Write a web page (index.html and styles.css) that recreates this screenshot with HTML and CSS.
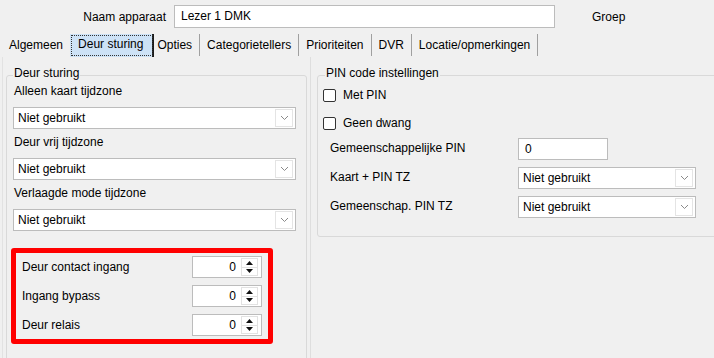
FILE: index.html
```html
<!DOCTYPE html>
<html lang="nl">
<head>
    <meta charset="UTF-8">
    <meta name="viewport" content="width=device-width, initial-scale=1.0">
    <title>Lezer instellingen - Deur sturing</title>
    <link rel="stylesheet" href="styles.css">
</head>
<body>
    <div class="window">
        <!-- Naam + groep -->
        <div class="header">
            <span class="name-label">Naam apparaat</span>
            <div class="textbox name-box">Lezer 1 DMK</div>
            <span class="group-label">Groep</span>
        </div>

        <!-- Tabbladen -->
        <div class="tabs">
            <span class="tab first">Algemeen</span>
            <span class="tab active">Deur sturing</span>
            <span class="tab after-active">Opties</span>
            <span class="tab">Categorietellers</span>
            <span class="tab">Prioriteiten</span>
            <span class="tab">DVR</span>
            <span class="tab">Locatie/opmerkingen</span>
        </div>

        <div class="tab-page">
            <!-- Linker kolom: deur sturing -->
            <div class="col-left">
                <div class="group group-door">
                    <div class="group-title">Deur sturing</div>

                    <div class="field-label">Alleen kaart tijdzone</div>
                    <div class="combo">
                        <span class="combo-text">Niet gebruikt</span>
                        <span class="drop"><svg width="9" height="6" viewBox="0 0 9 6"><path d="M1 1 L4.5 4.5 L8 1" fill="none" stroke="#8a8a8a" stroke-width="1"/></svg></span>
                    </div>

                    <div class="field-label">Deur vrij tijdzone</div>
                    <div class="combo">
                        <span class="combo-text">Niet gebruikt</span>
                        <span class="drop"><svg width="9" height="6" viewBox="0 0 9 6"><path d="M1 1 L4.5 4.5 L8 1" fill="none" stroke="#8a8a8a" stroke-width="1"/></svg></span>
                    </div>

                    <div class="field-label">Verlaagde mode tijdzone</div>
                    <div class="combo">
                        <span class="combo-text">Niet gebruikt</span>
                        <span class="drop"><svg width="9" height="6" viewBox="0 0 9 6"><path d="M1 1 L4.5 4.5 L8 1" fill="none" stroke="#8a8a8a" stroke-width="1"/></svg></span>
                    </div>

                    <div class="highlight">
                        <div class="spin-row">
                            <span class="spin-label">Deur contact ingang</span>
                            <div class="spinner">
                                <span class="spin-value">0</span>
                                <span class="spin-btns">
                                    <span class="spin-up"><svg width="7" height="4" viewBox="0 0 7 4"><path d="M0 4 L3.5 0 L7 4 Z" fill="#111"/></svg></span>
                                    <span class="spin-down"><svg width="7" height="4" viewBox="0 0 7 4"><path d="M0 0 L3.5 4 L7 0 Z" fill="#111"/></svg></span>
                                </span>
                            </div>
                        </div>
                        <div class="spin-row">
                            <span class="spin-label">Ingang bypass</span>
                            <div class="spinner">
                                <span class="spin-value">0</span>
                                <span class="spin-btns">
                                    <span class="spin-up"><svg width="7" height="4" viewBox="0 0 7 4"><path d="M0 4 L3.5 0 L7 4 Z" fill="#111"/></svg></span>
                                    <span class="spin-down"><svg width="7" height="4" viewBox="0 0 7 4"><path d="M0 0 L3.5 4 L7 0 Z" fill="#111"/></svg></span>
                                </span>
                            </div>
                        </div>
                        <div class="spin-row">
                            <span class="spin-label">Deur relais</span>
                            <div class="spinner">
                                <span class="spin-value">0</span>
                                <span class="spin-btns">
                                    <span class="spin-up"><svg width="7" height="4" viewBox="0 0 7 4"><path d="M0 4 L3.5 0 L7 4 Z" fill="#111"/></svg></span>
                                    <span class="spin-down"><svg width="7" height="4" viewBox="0 0 7 4"><path d="M0 0 L3.5 4 L7 0 Z" fill="#111"/></svg></span>
                                </span>
                            </div>
                        </div>
                    </div>
                </div>
            </div>

            <!-- Rechter kolom: PIN code -->
            <div class="col-right">
                <div class="group group-pin">
                    <div class="group-title">PIN code instellingen</div>

                    <div class="check-row">
                        <span class="checkbox"></span>
                        <span>Met PIN</span>
                    </div>
                    <div class="check-row">
                        <span class="checkbox"></span>
                        <span>Geen dwang</span>
                    </div>

                    <div class="pin-grid">
                        <span class="pin-label">Gemeenschappelijke PIN</span>
                        <div class="textbox pin-box">0</div>

                        <span class="pin-label">Kaart + PIN TZ</span>
                        <div class="combo combo-small">
                            <span class="combo-text">Niet gebruikt</span>
                            <span class="drop"><svg width="9" height="6" viewBox="0 0 9 6"><path d="M1 1 L4.5 4.5 L8 1" fill="none" stroke="#8a8a8a" stroke-width="1"/></svg></span>
                        </div>

                        <span class="pin-label">Gemeenschap. PIN TZ</span>
                        <div class="combo combo-small">
                            <span class="combo-text">Niet gebruikt</span>
                            <span class="drop"><svg width="9" height="6" viewBox="0 0 9 6"><path d="M1 1 L4.5 4.5 L8 1" fill="none" stroke="#8a8a8a" stroke-width="1"/></svg></span>
                        </div>
                    </div>
                </div>
            </div>
        </div>
    </div>
</body>
</html>
```

FILE: styles.css
```css
html, body {
    margin: 0;
    padding: 0;
    overflow: hidden;
}

body {
    background: #f0f0f0;
    font-family: "Liberation Sans", Arial, sans-serif;
    font-size: 12px;
    color: #000;
    width: 714px;
    height: 358px;
}

.window {
    width: 714px;
    height: 358px;
    overflow: hidden;
}

/* header */
.header {
    display: flex;
    align-items: center;
    padding-top: 5px;
    height: 23px;
    padding-bottom: 5px;
}

.name-label {
    width: 166px;
    text-align: right;
    margin-right: 8px;
}

.textbox {
    box-sizing: border-box;
    background: #fff;
    border: 1px solid #bcbcbc;
    height: 23px;
    line-height: 21px;
    padding-left: 6px;
}

.name-box {
    width: 381px;
}

.group-label {
    margin-left: 37px;
}

/* tabs */
.tabs {
    display: flex;
    align-items: stretch;
    height: 24px;
    padding-left: 4px;
}

.tab {
    display: flex;
    align-items: center;
    padding: 0 7px;
    border-right: 1px solid #a0a0a0;
    margin: 1px 0;
}

.tab.first {
    border-right: none;
    padding: 0 7px 0 5px;
}

.tab.active {
    background: #cde2f6;
    outline: 1px dotted #333;
    outline-offset: -2px;
    border-right: 2px solid #1c1c1c;
    padding: 0 9px 4px 8px;
    margin: 1px 0 0;
}

.tab.after-active {
    padding-left: 3px;
}

/* tab page */
.tab-page {
    display: flex;
    margin-left: 2px;
    border-left: 1px solid #e2e2e2;
    height: 301px;
    overflow: hidden;
}

.col-left {
    width: 307px;
    border-right: 1px solid #dedede;
}

.col-right {
    flex: 1;
}

.group {
    box-sizing: border-box;
    border: 1px solid #d9d9d9;
    border-radius: 3px;
    margin-top: 18px;
}

.group-title {
    width: fit-content;
    background: #f0f0f0;
    line-height: 14px;
    margin-top: -10px;
    padding: 0 1px;
}

.group-door {
    width: 301px;
    margin-left: 3px;
    height: 300px;
    padding-left: 6px;
}

.field-label {
    line-height: 14px;
    margin-top: 4px;
    padding-left: 1px;
}

.combo + .field-label {
    margin-top: 6px;
}

.combo {
    box-sizing: border-box;
    display: flex;
    align-items: center;
    justify-content: space-between;
    background: #fff;
    border: 1px solid #bcbcbc;
    height: 22px;
    width: 283px;
    margin-top: 9px;
}

.combo-text {
    padding-left: 4px;
}

.drop {
    box-sizing: border-box;
    display: flex;
    align-items: center;
    justify-content: center;
    width: 18px;
    height: 18px;
    margin-right: 2px;
    border: 1px solid #e4e4e4;
}

/* red highlight */
.highlight {
    box-sizing: border-box;
    width: 262px;
    margin: 17px 0 0 -2px;
    border: 5px solid #ff0000;
    border-radius: 3px;
    padding: 3px 6px;
    display: flex;
    flex-direction: column;
    gap: 7px;
}

.spin-row {
    display: flex;
    align-items: center;
    justify-content: space-between;
    height: 22px;
}

.spinner {
    box-sizing: border-box;
    display: flex;
    align-items: stretch;
    width: 70px;
    height: 22px;
    background: #fff;
    border: 1px solid #bcbcbc;
}

.spin-value {
    flex: 1;
    text-align: right;
    line-height: 20px;
    padding-right: 5px;
}

.spin-btns {
    display: flex;
    flex-direction: column;
    width: 15px;
    margin: 1px 3px 1px 0;
    border: 1px solid #e2e2e2;
}

.spin-up,
.spin-down {
    flex: 1;
    display: flex;
    align-items: center;
    justify-content: center;
}

.spin-up {
    border-bottom: 1px solid #e2e2e2;
}

/* PIN group */
.group-pin {
    margin-left: 6px;
    margin-right: -10px;
    height: 162px;
}

.group-pin .group-title {
    margin-left: 7px;
}

.check-row {
    display: flex;
    align-items: center;
    height: 16px;
    margin-top: 7px;
    padding-left: 5px;
}

.check-row + .check-row {
    margin-top: 12px;
}

.checkbox {
    box-sizing: border-box;
    width: 13px;
    height: 13px;
    border: 1px solid #333;
    border-radius: 2px;
    background: #fff;
    margin-right: 7px;
}

.pin-grid {
    display: grid;
    grid-template-columns: 188px auto;
    row-gap: 7px;
    align-items: center;
    margin-top: 7px;
    padding-left: 12px;
}

.pin-label {
    margin-top: -3px;
}

.pin-box {
    width: 90px;
    height: 22px;
    line-height: 20px;
}

.combo-small {
    width: 178px;
    margin-top: 0;
}
```
